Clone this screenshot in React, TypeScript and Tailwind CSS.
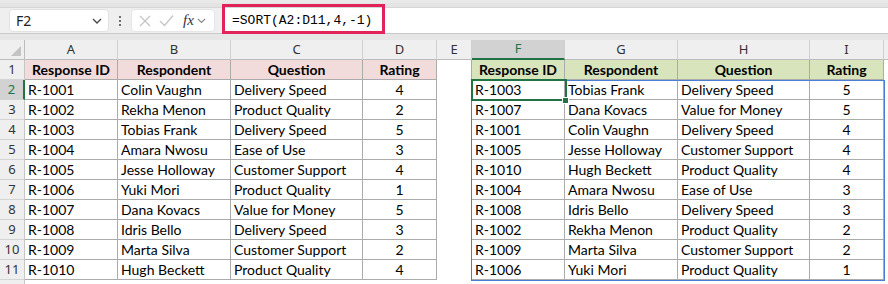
import React from "react";

type Row = [string, string, string, number];

const source: Row[] = [
  ["R-1001", "Colin Vaughn", "Delivery Speed", 4],
  ["R-1002", "Rekha Menon", "Product Quality", 2],
  ["R-1003", "Tobias Frank", "Delivery Speed", 5],
  ["R-1004", "Amara Nwosu", "Ease of Use", 3],
  ["R-1005", "Jesse Holloway", "Customer Support", 4],
  ["R-1006", "Yuki Mori", "Product Quality", 1],
  ["R-1007", "Dana Kovacs", "Value for Money", 5],
  ["R-1008", "Idris Bello", "Delivery Speed", 3],
  ["R-1009", "Marta Silva", "Customer Support", 2],
  ["R-1010", "Hugh Beckett", "Product Quality", 4],
];

// SORT(A2:D11,4,-1) keeps original order for ties
const sorted = [...source].sort((a, b) => b[3] - a[3]);

const headers = ["Response ID", "Respondent", "Question", "Rating"];
const letters = ["A", "B", "C", "D", "E", "F", "G", "H", "I"];

const cellFont = { fontFamily: "Lato, 'Noto Sans', sans-serif" };
const uiFont = { fontFamily: "'Noto Sans', 'Open Sans', sans-serif" };

const Cell = ({
  children,
  className = "",
}: {
  children?: React.ReactNode;
  className?: string;
}) => (
  <div
    className={`h-5 flex items-center overflow-hidden whitespace-nowrap text-[14px] text-black ${className}`}
    style={cellFont}
  >
    {children}
  </div>
);

const RowHead = ({ n, active }: { n?: number; active?: boolean }) => (
  <div
    className={`h-5 flex items-center justify-center text-[13px] border-b border-[#d4d4d4] ${
      active
        ? "bg-[#d2d2d2] text-[#217346] border-r-2 border-r-[#217346]"
        : "bg-[#efefef] text-[#333] border-r border-r-[#c6c6c6]"
    }`}
    style={uiFont}
  >
    {n}
  </div>
);

const tableCells = (r: Row) => [
  <Cell key="a" className="pl-[3px] border-r border-b border-[#ababab]">
    {r[0]}
  </Cell>,
  <Cell key="b" className="pl-[3px] border-r border-b border-[#ababab]">
    {r[1]}
  </Cell>,
  <Cell key="c" className="pl-[3px] border-r border-b border-[#ababab]">
    {r[2]}
  </Cell>,
  <Cell key="d" className="justify-center border-r border-b border-[#ababab]">
    {r[3]}
  </Cell>,
];

const headCells = (bg: string) =>
  headers.map((h) => (
    <Cell
      key={h}
      className={`justify-center font-bold border-r border-b border-[#ababab] ${bg}`}
    >
      {h}
    </Cell>
  ));

export default function App() {
  return (
    <div className="w-[888px] h-[284px] overflow-hidden bg-white flex flex-col">
      {/* ribbon edge */}
      <div className="h-2 bg-[#e4e4e4] border-t-[3px] border-t-[#e9e9e9] border-b border-b-[#d6d6d6] shrink-0" />

      {/* formula bar */}
      <div className="h-[26px] flex items-stretch bg-[#efefef] border-b border-[#c9c9c9] shrink-0 relative">
        <div className="w-[100px] ml-[9px] my-px rounded-[4px] bg-white border border-[#e2e2e2] flex items-center justify-between pl-[6px] pr-[6px]">
          <span className="text-[14px] text-[#222]" style={uiFont}>
            F2
          </span>
          <svg width="10" height="6" viewBox="0 0 10 6">
            <path d="M1 1l4 4 4-4" fill="none" stroke="#444" strokeWidth="1.3" />
          </svg>
        </div>
        <div className="w-[22px] flex flex-col items-center justify-center gap-[2px]">
          <span className="w-[2px] h-[2px] bg-[#444] rounded-full" />
          <span className="w-[2px] h-[2px] bg-[#444] rounded-full" />
          <span className="w-[2px] h-[2px] bg-[#444] rounded-full" />
        </div>
        <div className="w-[84px] my-px rounded-[4px] bg-white border border-[#e6e6e6] flex items-center pl-[6px] gap-[7px]">
          <svg width="14" height="14" viewBox="0 0 14 14">
            <path d="M2 2l10 10M12 2L2 12" stroke="#c4c4c4" strokeWidth="1.2" />
          </svg>
          <svg width="15" height="13" viewBox="0 0 15 13">
            <path d="M1 7l4.5 4.5L14 1.5" fill="none" stroke="#c4c4c4" strokeWidth="1.2" />
          </svg>
          <span
            className="italic text-[15px] text-[#333] leading-none ml-[2px]"
            style={{ fontFamily: "'Liberation Serif', serif" }}
          >
            fx
          </span>
          <svg width="9" height="6" viewBox="0 0 9 6" className="-ml-[4px]">
            <path d="M1 1l3.5 3.5L8 1" fill="none" stroke="#888" strokeWidth="1.1" />
          </svg>
        </div>
        <div className="flex-1 ml-[7px] bg-white flex items-center pl-[10px]">
          <span
            className="text-[13px] text-black"
            style={{ fontFamily: "'Liberation Mono', monospace" }}
          >
            =SORT(A2:D11,4,-1)
          </span>
        </div>
        {/* annotation box */}
        <div className="absolute left-[222px] top-[-4px] w-[163px] h-[30px] border-[3px] border-[#e0245a]" />
      </div>

      <div className="h-[6px] bg-[#e6e6e6] shrink-0" />

      {/* sheet */}
      <div className="relative flex-1">
        <div className="grid grid-cols-[25px_93px_113px_132px_74px_35px_93px_113px_132px_74px_1fr]">
          {/* column headers */}
          <div className="h-5 bg-[#efefef] border-r border-b border-[#bdbdbd] flex items-end justify-end pr-[3px] pb-[3px]">
            <svg width="10" height="10" viewBox="0 0 10 10">
              <path d="M10 0L10 10L0 10Z" fill="#c3c3c3" />
            </svg>
          </div>
          {letters.map((l) => (
            <div
              key={l}
              className={`h-5 flex items-center justify-center text-[13px] border-r border-r-[#d0d0d0] ${
                l === "F"
                  ? "bg-[#d2d2d2] text-[#217346] border-b-2 border-b-[#217346]"
                  : "bg-[#efefef] text-[#333] border-b border-b-[#bdbdbd]"
              }`}
              style={uiFont}
            >
              {l}
            </div>
          ))}
          <div className="h-5 bg-[#efefef] border-b border-[#bdbdbd]" />

          {/* row 1 */}
          <RowHead n={1} />
          {headCells("bg-[#f2dcdb]")}
          <Cell className="border-r border-[#ababab]" />
          {headCells("bg-[#d8e4bc]")}
          <Cell />

          {source.map((r, i) => (
            <React.Fragment key={r[0]}>
              <RowHead n={i + 2} active={i === 0} />
              {tableCells(r)}
              <Cell className="border-r border-[#ababab]" />
              {tableCells(sorted[i])}
              <Cell />
            </React.Fragment>
          ))}

          <RowHead />
        </div>

        {/* spill range outline */}
        <div className="absolute left-[471px] top-[40px] w-[414px] h-[201px] border border-[#4a7fd4] pointer-events-none" />
        {/* active cell */}
        <div className="absolute left-[471px] top-[39px] w-[96px] h-[22px] border-2 border-[#217346] pointer-events-none" />
        <div className="absolute left-[562px] top-[57px] w-[7px] h-[7px] bg-[#217346] border border-white" />
      </div>
    </div>
  );
}
